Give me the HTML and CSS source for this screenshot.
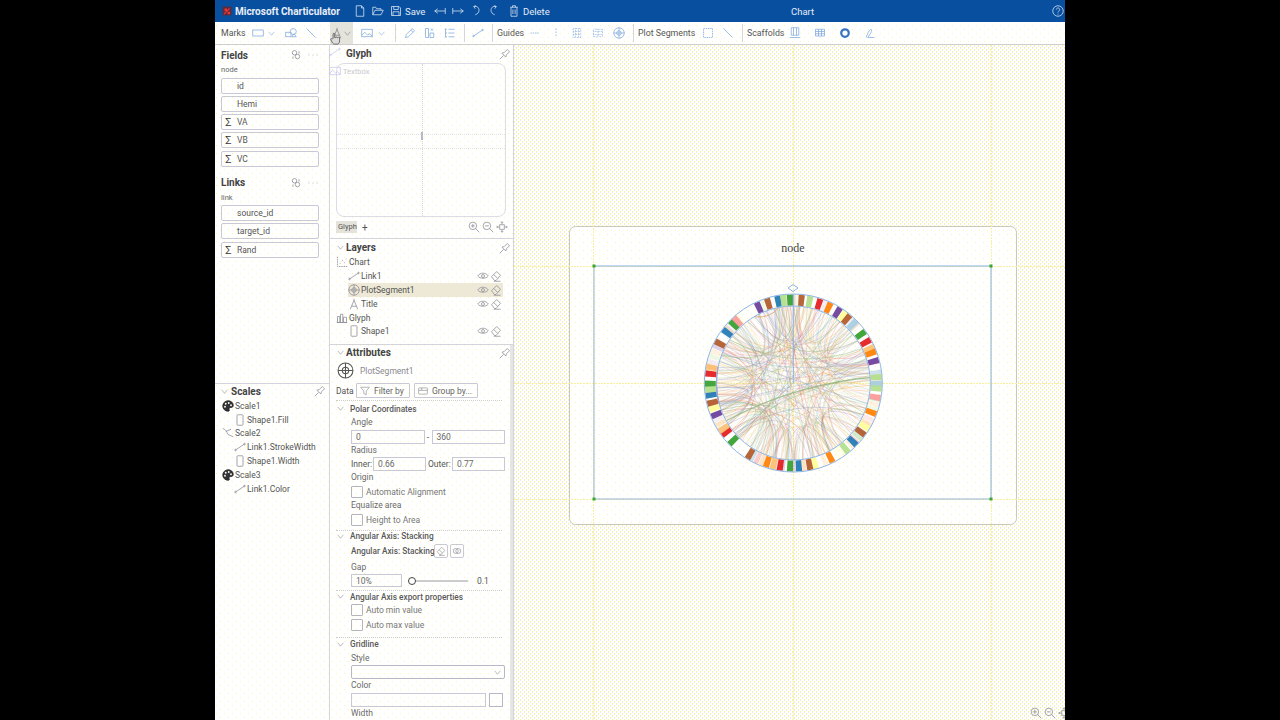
FILE: index.html
```html
<!DOCTYPE html>
<html lang="en">
<head>
<meta charset="utf-8">
<title>Microsoft Charticulator</title>
<link rel="stylesheet" href="styles.css">
</head>
<body>
<svg class="defs" aria-hidden="true">
  <symbol id="doc" viewBox="0 0 16 16"><path d="M3 1h7l3 3v11H3zM10 1v3h3"/></symbol>
  <symbol id="folder" viewBox="0 0 16 16"><path d="M1 13V3h4l1 2h6v2M1 13l3-6h11l-3 6z"/></symbol>
  <symbol id="save" viewBox="0 0 16 16"><path d="M2 2h10l2 2v10H2zM5 2v4h6V2M4 14V9h8v5"/></symbol>
  <symbol id="exl" viewBox="0 0 16 16"><path d="M15 4v8M15 8H1M5 5L1 8l4 3"/></symbol>
  <symbol id="exr" viewBox="0 0 16 16"><path d="M1 4v8M1 8h14M11 5l4 3-4 3"/></symbol>
  <symbol id="undo" viewBox="0 0 16 16"><path d="M5 2c5-1 7 2 7 5s-2 5-5 6M5 2l3-1M5 2l2 3"/></symbol>
  <symbol id="redo" viewBox="0 0 16 16"><path d="M11 2C6 1 4 4 4 7s2 5 5 6M11 2L8 1M11 2L9 5"/></symbol>
  <symbol id="trash" viewBox="0 0 16 16"><path d="M3 3h10M6 3V1h4v2M4 3v12h8V3M6.500 6v6M9.500 6v6"/></symbol>
  <symbol id="help" viewBox="0 0 16 16"><circle cx="8" cy="8" r="7"/><path d="M5.800 6a2.200 2.200 0 1 1 3.400 2c-.8.6-1.200 1-1.200 2M8 11.500v1.200"/></symbol>
  <symbol id="rect" viewBox="0 0 16 16"><rect x="1" y="4" width="14" height="8"/></symbol>
  <symbol id="chev" viewBox="0 0 16 16"><path d="M3 5l5 6 5-6"/></symbol>
  <symbol id="shapes" viewBox="0 0 16 16"><circle cx="11" cy="6" r="4"/><rect x="1" y="7" width="7" height="6"/><path d="M9 13l3-4 3 4z"/></symbol>
  <symbol id="line" viewBox="0 0 16 16"><path d="M2 2l12 12"/></symbol>
  <symbol id="textA" viewBox="0 0 16 16"><path d="M3 15L8 3l5 12M5 11h6M8 3V1"/></symbol>
  <symbol id="image" viewBox="0 0 16 16"><rect x="1" y="3" width="14" height="10"/><path d="M1 11l4-4 4 4 2-2 4 3"/></symbol>
  <symbol id="pencil" viewBox="0 0 16 16"><path d="M2 14l1-4 8-8 3 3-8 8zM9 4l3 3"/></symbol>
  <symbol id="icons" viewBox="0 0 16 16"><path d="M2 2h4v12H2zM8 8h5v6H8zM9 2l3 3M12 2L9 5"/></symbol>
  <symbol id="legend" viewBox="0 0 16 16"><path d="M2 2v12M2 3h2M2 8h2M2 13h2M6 3h8M6 8h8M6 13h8"/></symbol>
  <symbol id="link" viewBox="0 0 16 16"><path d="M2 12l12-8"/><circle cx="2" cy="12" r="1"/><circle cx="14" cy="4" r="1"/></symbol>
  <symbol id="dash" viewBox="0 0 16 16"><path d="M2 8h12" stroke-dasharray="2 1"/></symbol>
  <symbol id="vdash" viewBox="0 0 16 16"><path d="M8 2v12" stroke-dasharray="2 2"/></symbol>
  <symbol id="xgrid" viewBox="0 0 16 16"><path d="M3 2h10v12H3zM6 2v12M10 2v12M3 6h10M3 10h10" stroke-dasharray="1 1"/></symbol>
  <symbol id="ygrid" viewBox="0 0 16 16"><path d="M2 3h12v10H2zM2 6h12M2 10h12M8 3v10" stroke-dasharray="1 1"/></symbol>
  <symbol id="polar" viewBox="0 0 16 16"><circle cx="8" cy="8" r="7"/><circle cx="8" cy="8" r="3"/><path d="M1 8h14M8 1v14"/></symbol>
  <symbol id="sq" viewBox="0 0 16 16"><rect x="2" y="2" width="12" height="12" stroke-dasharray="2 1"/></symbol>
  <symbol id="colg" viewBox="0 0 16 16"><path d="M3 1h10v10H3zM6 1v10M10 1v10M1 14h14"/></symbol>
  <symbol id="rowg" viewBox="0 0 16 16"><path d="M2 3h12v9H2zM2 6h12M2 9h12M6 3v9M10 3v9"/></symbol>
  <symbol id="ringi" viewBox="0 0 16 16"><circle cx="8" cy="8" r="5" stroke-width="3"/></symbol>
  <symbol id="curve" viewBox="0 0 16 16"><path d="M3 14c1-4 3-9 6-11 2 0 1 3 0 5l-4 6h9"/></symbol>
  <symbol id="pin" viewBox="0 0 16 16"><path d="M1 15l5-5M4 7l5 5 1-3 4-4-3-3-4 4z"/></symbol>
  <symbol id="more" viewBox="0 0 16 16"><path d="M2 8h1M7.500 8h1M13 8h1"/></symbol>
  <symbol id="data" viewBox="0 0 16 16"><circle cx="6" cy="5" r="3"/><circle cx="10" cy="10" r="3"/><path d="M12 3v3M4 10v3"/></symbol>
  <symbol id="zin" viewBox="0 0 16 16"><circle cx="6.500" cy="6.500" r="5"/><path d="M10 10l5 5M4 6.500h5M6.500 4v5"/></symbol>
  <symbol id="zout" viewBox="0 0 16 16"><circle cx="6.500" cy="6.500" r="5"/><path d="M10 10l5 5M4 6.500h5"/></symbol>
  <symbol id="move" viewBox="0 0 16 16"><rect x="5" y="5" width="6" height="6"/><path d="M8 1v3M8 12v3M1 8h3M12 8h3M6.500 2.500L8 1l1.500 1.500M6.500 13.500L8 15l1.500-1.500M2.500 6.500L1 8l1.500 1.500M13.500 6.500L15 8l-1.500 1.500"/></symbol>
  <symbol id="eye" viewBox="0 0 16 16"><path d="M1 8c3-5 11-5 14 0-3 4-11 4-14 0z"/><circle cx="8" cy="8" r="2"/></symbol>
  <symbol id="eraser" viewBox="0 0 16 16"><path d="M2 9l7-7 5 5-6 7H6zM5 6l5 5M5 15h9"/></symbol>
  <symbol id="chartl" viewBox="0 0 16 16"><path d="M2 1v13h13" stroke-dasharray="2 1"/><path d="M5 10h1M8 6h1M11 9h1M13 4h1"/></symbol>
  <symbol id="glyphl" viewBox="0 0 16 16"><path d="M1 14h14M2 6h3v8H2zM6 3h3v11H6zM10 7h4v7h-4z"/></symbol>
  <symbol id="shape" viewBox="0 0 16 16"><rect x="4" y="1" width="8" height="14" rx="1"/></symbol>
  <symbol id="palette" viewBox="0 0 16 16"><path class="solid" d="M8 1a7 7 0 1 0 0 14c2 0 2-1 1.500-2.500S10 10 12 10s3-1 3-3c0-3.500-3-6-7-6z"/><circle class="hole" cx="5" cy="5" r="1.200"/><circle class="hole" cx="9" cy="4" r="1.200"/><circle class="hole" cx="4" cy="9" r="1.200"/><circle class="hole" cx="12" cy="7" r="1.200"/></symbol>
  <symbol id="scalec" viewBox="0 0 16 16"><path d="M1 2c4 1 5 4 7 8M5 6l7-3M8 10l7 3"/></symbol>
  <symbol id="filter" viewBox="0 0 16 16"><path d="M1 2h14L10 8v6l-4-2V8z"/></symbol>
  <symbol id="group" viewBox="0 0 16 16"><rect x="1" y="3" width="14" height="10" rx="1"/><path d="M1 7h14M6 3v4"/></symbol>
  <symbol id="tlink" viewBox="0 0 16 16"><circle cx="6" cy="8" r="4"/><circle cx="10" cy="8" r="4"/></symbol>
  <symbol id="hand" viewBox="0 0 16 16"><path class="handf" d="M5 8V2.500a1 1 0 0 1 2 0V7h1a1 1 0 0 1 2 0h1a1 1 0 0 1 2 .5V11c0 2-1 4-3 4H7c-2 0-3-2-4-4l-1-2c0-1 1-1 2-.5z"/></symbol>
  <symbol id="logo" viewBox="0 0 16 16"><rect class="logor" x="1" y="1" width="14" height="14"/><path class="logop" d="M3 13L12 4M5 5h2v2H5zM10 10h2v2h-2z"/></symbol>
</svg>

<div class="app">
  <header class="topbar">
    <svg class="i logo"><use href="#logo"/></svg>
    <span class="brand">Microsoft Charticulator</span>
    <div class="topbtns">
      <svg class="i t"><use href="#doc"/></svg>
      <svg class="i t"><use href="#folder"/></svg>
      <svg class="i t"><use href="#save"/></svg><span class="tl">Save</span>
      <svg class="i t ex"><use href="#exl"/></svg>
      <svg class="i t"><use href="#exr"/></svg>
      <svg class="i t"><use href="#undo"/></svg>
      <svg class="i t"><use href="#redo"/></svg>
      <svg class="i t ex2"><use href="#trash"/></svg><span class="tl">Delete</span>
    </div>
    <span class="doc-title">Chart</span>
    <svg class="i help"><use href="#help"/></svg>
  </header>

  <nav class="toolbar">
    <span class="tbl marks">Marks</span>
    <span class="tb b16"><svg class="i"><use href="#rect"/></svg></span>
    <span class="tb b10"><svg class="i s"><use href="#chev"/></svg></span>
    <span class="tb b20 m5"><svg class="i"><use href="#shapes"/></svg></span>
    <span class="tb b20"><svg class="i"><use href="#line"/></svg></span>
    <span class="tb hot"><svg class="i gr"><use href="#textA"/></svg><svg class="i s gr"><use href="#chev"/></svg></span>
    <span class="tb b18 m5"><svg class="i"><use href="#image"/></svg></span>
    <span class="tb b10"><svg class="i s"><use href="#chev"/></svg></span>
    <span class="sep s1"></span>
    <span class="tb b20 m4"><svg class="i"><use href="#pencil"/></svg></span>
    <span class="tb b20"><svg class="i"><use href="#icons"/></svg></span>
    <span class="tb b20"><svg class="i"><use href="#legend"/></svg></span>
    <span class="sep s2"></span>
    <span class="tb b20"><svg class="i"><use href="#link"/></svg></span>
    <span class="sep s3"></span>
    <span class="tbl gd">Guides</span>
    <span class="tb b20"><svg class="i"><use href="#dash"/></svg></span>
    <span class="tb b20 m1"><svg class="i"><use href="#vdash"/></svg></span>
    <span class="tb b20 m1"><svg class="i"><use href="#xgrid"/></svg></span>
    <span class="tb b20 m1"><svg class="i"><use href="#ygrid"/></svg></span>
    <span class="tb b20 m1"><svg class="i"><use href="#polar"/></svg></span>
    <span class="sep s4"></span>
    <span class="tbl ps">Plot Segments</span>
    <span class="tb b20 m2"><svg class="i"><use href="#sq"/></svg></span>
    <span class="tb b20"><svg class="i"><use href="#line"/></svg></span>
    <span class="sep s5"></span>
    <span class="tbl sf">Scaffolds</span>
    <span class="tb b20 m2"><svg class="i"><use href="#colg"/></svg></span>
    <span class="tb b20 m5"><svg class="i"><use href="#rowg"/></svg></span>
    <span class="tb b20 m5"><svg class="i strong"><use href="#ringi"/></svg></span>
    <span class="tb b20 m5"><svg class="i"><use href="#curve"/></svg></span>
  </nav>

  <main class="main">
    <aside class="left">
      <section class="datasets">
        <div class="ds-head"><h2>Fields</h2><svg class="i g"><use href="#data"/></svg><svg class="i g"><use href="#more"/></svg></div>
        <div class="tbl-name">node</div>
        <div class="field"><span class="sig"></span>id</div>
        <div class="field"><span class="sig"></span>Hemi</div>
        <div class="field"><span class="sig">∑</span>VA</div>
        <div class="field"><span class="sig">∑</span>VB</div>
        <div class="field"><span class="sig">∑</span>VC</div>
        <div class="ds-head links"><h2>Links</h2><svg class="i g"><use href="#data"/></svg><svg class="i g"><use href="#more"/></svg></div>
        <div class="tbl-name">link</div>
        <div class="field"><span class="sig"></span>source_id</div>
        <div class="field"><span class="sig"></span>target_id</div>
        <div class="field"><span class="sig">∑</span>Rand</div>
      </section>
      <section class="scales">
        <div class="p-head"><svg class="i s g"><use href="#chev"/></svg><h2>Scales</h2><svg class="i g"><use href="#pin"/></svg></div>
        <div class="row r0"><svg class="i pal"><use href="#palette"/></svg>Scale1</div>
        <div class="row r1"><svg class="i g"><use href="#shape"/></svg>Shape1.Fill</div>
        <div class="row r0"><svg class="i g"><use href="#scalec"/></svg>Scale2</div>
        <div class="row r1"><svg class="i g"><use href="#link"/></svg>Link1.StrokeWidth</div>
        <div class="row r1"><svg class="i g"><use href="#shape"/></svg>Shape1.Width</div>
        <div class="row r0"><svg class="i pal"><use href="#palette"/></svg>Scale3</div>
        <div class="row r1"><svg class="i g"><use href="#link"/></svg>Link1.Color</div>
      </section>
    </aside>

    <div class="mid">
      <section class="glyph">
        <div class="p-head gh"><h2>Glyph</h2><svg class="i g"><use href="#pin"/></svg></div>
        <div class="gcanvas"><span class="gv"></span><span class="gh1"></span><span class="gh2"></span><span class="gtick"></span></div>
        <div class="gtabs"><span class="gtab">Glyph</span><span class="plus">+</span><span class="spring"></span>
          <svg class="i g"><use href="#zin"/></svg><svg class="i g"><use href="#zout"/></svg><svg class="i g"><use href="#move"/></svg></div>
        <div class="menuover"><div class="mrow"><svg class="i mo"><use href="#link"/></svg></div><div class="mrow"><svg class="i mo"><use href="#image"/></svg>Textbox</div></div>
      </section>

      <section class="layers">
        <div class="p-head"><svg class="i s g"><use href="#chev"/></svg><h2>Layers</h2><svg class="i g"><use href="#pin"/></svg></div>
        <div class="row r0"><svg class="i g"><use href="#chartl"/></svg>Chart</div>
        <div class="row r1"><svg class="i g"><use href="#link"/></svg>Link1<span class="spring"></span><svg class="i g"><use href="#eye"/></svg><svg class="i g"><use href="#eraser"/></svg></div>
        <div class="row r1 sel"><svg class="i g"><use href="#polar"/></svg>PlotSegment1<span class="spring"></span><svg class="i g"><use href="#eye"/></svg><svg class="i g"><use href="#eraser"/></svg></div>
        <div class="row r1"><svg class="i g"><use href="#textA"/></svg>Title<span class="spring"></span><svg class="i g"><use href="#eye"/></svg><svg class="i g"><use href="#eraser"/></svg></div>
        <div class="row r0"><svg class="i g"><use href="#glyphl"/></svg>Glyph</div>
        <div class="row r1"><svg class="i g"><use href="#shape"/></svg>Shape1<span class="spring"></span><svg class="i g"><use href="#eye"/></svg><svg class="i g"><use href="#eraser"/></svg></div>
      </section>

      <section class="attrs">
        <div class="p-head"><svg class="i s g"><use href="#chev"/></svg><h2>Attributes</h2><svg class="i g"><use href="#pin"/></svg></div>
        <div class="obj"><svg class="i big"><use href="#polar"/></svg><span>PlotSegment1</span></div>
        <div class="datarow"><span class="dl">Data</span>
          <span class="btn bf"><svg class="i g"><use href="#filter"/></svg>Filter by</span>
          <span class="btn bg"><svg class="i g"><use href="#group"/></svg>Group by...</span></div>

        <div class="sec s-polar">
          <div class="sec-h"><svg class="i s g"><use href="#chev"/></svg>Polar Coordinates</div>
          <div class="lab">Angle</div>
          <div class="inrow"><span class="inp">0</span><span class="dashc">-</span><span class="inp">360</span></div>
          <div class="lab">Radius</div>
          <div class="inrow"><span class="il">Inner:</span><span class="inp">0.66</span><span class="il">Outer:</span><span class="inp">0.77</span></div>
          <div class="lab">Origin</div>
          <div class="chk"><span class="box"></span>Automatic Alignment</div>
          <div class="lab l2">Equalize area</div>
          <div class="chk"><span class="box"></span>Height to Area</div>
        </div>

        <div class="sec s-stack">
          <div class="sec-h"><svg class="i s g"><use href="#chev"/></svg>Angular Axis: Stacking</div>
          <div class="stack"><b>Angular Axis: Stacking</b><span class="sq"><svg class="i g"><use href="#eraser"/></svg></span><span class="sq"><svg class="i g"><use href="#tlink"/></svg></span></div>
          <div class="lab l3">Gap</div>
          <div class="gap"><span class="inp g10">10%</span><span class="slider"><span class="thumb"></span></span><span class="val">0.1</span></div>
        </div>

        <div class="sec s-exp">
          <div class="sec-h"><svg class="i s g"><use href="#chev"/></svg>Angular Axis export properties</div>
          <div class="chk c3"><span class="box"></span>Auto min value</div>
          <div class="chk c3"><span class="box"></span>Auto max value</div>
        </div>

        <div class="sec last">
          <div class="sec-h"><svg class="i s g"><use href="#chev"/></svg>Gridline</div>
          <div class="lab">Style</div>
          <div class="select"><svg class="i s g"><use href="#chev"/></svg></div>
          <div class="lab">Color</div>
          <div class="colorrow"><span class="inp wide"></span><span class="swatch"></span></div>
          <div class="lab">Width</div>
          <div class="select"></div>
        </div>
      </section>
    </div>

    <section class="canvas">
      <svg class="chart" id="chart" viewBox="514 45 551 675">
        <defs>
          <pattern id="sparse" width="8" height="8" patternUnits="userSpaceOnUse" x="514" y="45">
            <rect width="8" height="8" fill="#fff"/>
            <rect x="1" y="1" width="1" height="1" fill="#fbf7a8"/>
            <rect x="5" y="5" width="1" height="1" fill="#fbf7a8"/>
          </pattern>
        </defs>
        <rect class="frame" x="569.500" y="226.500" width="447" height="298" rx="6"/>
        <g class="guides">
          <path d="M593.500 45V720M793.500 45V720M991.500 45V720"/>
          <path d="M514 266.500H1065M514 383.500H1065M514 499.500H1065"/>
        </g>
        <text class="title" x="793" y="252">node</text>
        <g id="chords"></g>
        <g id="ringcells"></g>
        <circle class="axis" cx="793.300" cy="383" r="89"/>
        <circle class="axis" cx="793.300" cy="383" r="77"/>
        <path class="axis" d="M793.300 294V383"/>
        <path class="diamond" d="M788 288l5-3.500 5 3.500-5 3.500z"/>
        <path class="pbox" d="M594 266H991V499"/>
        <path class="pbox2" d="M594 266V499H991"/>
        <rect class="handle" x="592.500" y="264.500" width="3" height="3"/>
        <rect class="handle" x="989.500" y="264.500" width="3" height="3"/>
        <rect class="handle" x="592.500" y="497.500" width="3" height="3"/>
        <rect class="handle" x="989.500" y="497.500" width="3" height="3"/>
      </svg>
      <div class="czoom"><svg class="i g"><use href="#zin"/></svg><svg class="i g"><use href="#zout"/></svg><svg class="i g"><use href="#move"/></svg></div>
    </section>
  </main>
  <svg class="i cursor"><use href="#hand"/></svg>
</div>
<script src="chart.js"></script>
</body>
</html>
```

FILE: styles.css
```css
* { box-sizing: border-box; }
html, body { margin: 0; height: 100%; background: #000; overflow: hidden; }
body { display: flex; justify-content: center; font-family: Roboto, "Noto Sans", sans-serif; font-size: 8.500px; color: #555; }
h2 { margin: 0; font-size: 10px; font-weight: 700; color: #444; }
.defs { position: absolute; width: 0; height: 0; }
.app { position: relative; width: 850px; height: 720px; display: flex; flex-direction: column; background-color: #fff;
  background-image: conic-gradient(from 270deg at 1px 1px, #fbf7a8 25%, transparent 0), conic-gradient(from 270deg at 1px 1px, #fbf7a8 25%, transparent 0);
  background-size: 8px 8px; background-position: 1px 1px, 5px 5px; }

.i { width: 12px; height: 12px; flex: none; fill: none; stroke: currentColor; stroke-width: 1; color: #7fa8dc; }
.i.s { width: 9px; height: 9px; }
.i.g { color: #8a8a94; }
.i.gr { color: #7a7a80; }
.i.strong { color: #3a72c0; }
.solid { fill: #333; stroke: #222; }
.hole { fill: #fff; stroke: none; }
.logor { fill: #5c2a3a; stroke: none; }
.logop { stroke: #e33; stroke-width: 2; }
.handf { fill: #ddd; stroke: #555; }

.topbar { height: 22px; flex: none; display: flex; align-items: center; padding-left: 7px; background: #08509f; color: #fff; position: relative; }
.i.logo { width: 10px; height: 10px; margin-right: 3px; }
.brand { font-size: 10px; font-weight: 700; width: 107px; color: #e8eef8; white-space: nowrap; }
.topbtns { display: flex; align-items: center; margin-left: 6px; }
.i.t { color: #dfe8f5; margin-left: 6px; }
.i.ex { margin-left: 9px; }
.i.ex2 { margin-left: 8px; }
.tl { margin-left: 3px; width: 20px; font-size: 9.500px; color: #e4ecf7; }
.doc-title { position: absolute; left: 576px; font-size: 9.500px; color: #e4ecf7; }
.i.help { position: absolute; left: 837px; color: #dfe8f5; }

.toolbar { height: 23px; flex: none; display: flex; align-items: center; padding-left: 6px; border-bottom: 1px solid #cfcfcf; font-size: 8.800px; color: #555; }
.tbl { white-space: nowrap; }
.gd { width: 28px; }
.ps { width: 58px; }
.sf { width: 36px; }
.tb { height: 22px; display: flex; align-items: center; justify-content: center; flex: none; }
.b16 { width: 16px; }
.b10 { width: 10px; }
.b18 { width: 18px; }
.b20 { width: 20px; }
.marks { width: 29px; }
.m1 { margin-left: 1px; }
.m2 { margin-left: 2px; }
.m4 { margin-left: 4px; }
.m5 { margin-left: 5px; }
.hot { width: 23px; margin-left: 9px; background: #e4e4dc; }
.sep { width: 1px; height: 18px; background: #d6d6d6; flex: none; }
.s1 { margin-left: 9px; }
.s2 { margin: 0 3px 0 4px; }
.s3 { margin: 0 4px 0 4px; }
.s4 { margin: 0 4px 0 4px; }
.s5 { margin: 0 4px 0 4px; }

.main { flex: 1; display: flex; min-height: 0; }
.left { width: 115px; flex: none; display: flex; flex-direction: column; border-right: 1px solid #d4d4dc; }
.datasets { flex: 1; padding: 3px 10px 0 6px; }
.ds-head { height: 14px; display: flex; align-items: center; gap: 5px; }
.ds-head h2 { flex: 1; }
.ds-head.links { margin-top: 9px; }
.tbl-name { height: 15.500px; padding-top: 3px; font-size: 7.500px; color: #666; }
.field { height: 16px; margin-bottom: 2.300px; display: flex; align-items: center; border: 1px solid #c9c9d4; border-radius: 2px; color: #555; }
.sig { width: 15px; padding-left: 3px; font-size: 10px; color: #333; line-height: 1; }
.scales { height: 337px; flex: none; border-top: 1px solid #d4d4dc; padding: 0 3px 0 5px; }
.p-head { height: 15px; display: flex; align-items: center; gap: 1px; }
.p-head h2 { flex: 1; }
.scales .p-head { height: 14px; margin-bottom: 1px; gap: 2px; }
.row { height: 13.800px; display: flex; align-items: center; gap: 1px; white-space: nowrap; color: #555; }
.r0 { padding-left: 2px; }
.r1 { padding-left: 14px; }
.pal { color: #222; }
.spring { flex: 1; }

.mid { width: 184px; flex: none; display: flex; flex-direction: column; border-right: 1px solid #d4d4dc; }
.glyph { position: relative; height: 194px; flex: none; padding: 1px 2px 0 6px; border-bottom: 1px solid #d4d4dc; }
.gh { padding-left: 10px; }
.gcanvas { position: relative; height: 154px; width: 170px; margin-top: 2px; border: 1px solid #dcdce6; border-radius: 8px; }
.gv { position: absolute; left: 85px; top: 0; bottom: 0; border-left: 1px dotted #d4d4dc; }
.gh1 { position: absolute; left: 0; right: 0; top: 70px; border-top: 1px dotted #e2e2e2; }
.gh2 { position: absolute; left: 0; right: 0; top: 84px; border-top: 1px dotted #e2e2e2; }
.gtick { position: absolute; left: 84px; top: 68px; width: 2px; height: 8px; background: #b8b8c4; }
.gtabs { display: flex; align-items: center; gap: 2px; height: 14px; margin-top: 3px; padding-right: 3px; font-size: 7.500px; }
.gtab { background: #e4e4dc; padding: 1px 2px; height: 12px; line-height: 10px; width: 21px; white-space: nowrap; }
.plus { margin-left: 3px; font-size: 10px; }
.menuover { position: absolute; left: -1px; top: 1px; display: flex; flex-direction: column; gap: 7px; color: #c8c8d0; font-size: 7.500px; }
.mrow { display: flex; align-items: center; gap: 2px; }
.i.mo { color: #c4c8e8; }
.layers { height: 106px; flex: none; padding: 1px 2px 0 6px; border-bottom: 1px solid #d4d4dc; }
.layers .p-head { margin-bottom: .5px; }
.layers .r0 { padding-left: 0; }
.layers .r1 { padding-left: 0; margin-left: 12px; }
.layers .row { padding-right: 1px; margin-right: 8px; }
.sel { background: #eee9d6; }
.attrs { flex: 1; min-height: 0; overflow: hidden; padding: 0 8px 0 6px; border-right: 3px solid #e6e6e6; }
.attrs .p-head { margin-right: -9px; }
.obj { height: 21px; display: flex; align-items: center; gap: 6px; color: #8a8a94; }
.i.big { width: 17px; height: 17px; color: #555; margin-left: 1px; }
.datarow { height: 18px; margin-top: 2px; display: flex; align-items: center; gap: 4px; border-bottom: 1px dotted #ccc; padding-bottom: 2px; }
.dl { width: 16px; }
.btn { height: 15px; flex: none; display: flex; align-items: center; gap: 4px; border: 1px solid #c9c9d4; padding: 0 3px; border-radius: 1px; white-space: nowrap; color: #666; }
.btn .i { width: 10px; height: 10px; }
.bf { width: 54px; }
.bg { width: 64px; }
.sec { border-bottom: 1px dotted #ccc; padding-bottom: 4px; margin-top: -1px; }
.s-polar { margin-top: 0; padding-bottom: 3.500px; }
.s-stack { padding-bottom: 3px; }
.s-exp { padding-bottom: 5.500px; }
.sec-h { height: 13px; display: flex; align-items: center; gap: 5px; color: #5a5a5a; white-space: nowrap; font-size: 8.300px; font-weight: 500; }
.s-polar .sec-h { height: 15px; }
.s-exp .sec-h { height: 13.500px; }
.last .sec-h { height: 15px; }
.lab { height: 13.500px; line-height: 13px; margin-left: 15px; color: #6a6a6a; }
.l2 { margin-top: 1px; }
.l3 { margin-top: 3px; }
.inrow { display: flex; align-items: center; height: 14px; margin-left: 15px; width: 154px; }
.inp { flex: 1; min-width: 0; height: 14px; border: 1px solid #c9c9d4; padding: 0 4px; line-height: 12px; color: #666; }
.dashc { width: 7px; text-align: center; }
.il { width: 22px; flex: none; font-size: 8.500px; }
.il ~ .il { width: 26px; padding-left: 2px; }
.chk { height: 13px; display: flex; align-items: center; gap: 3px; margin-left: 15px; color: #777; margin-top: .5px; }
.c3 { margin-top: 1.500px; }
.sec-h + .c3 { margin-top: 0; }
.box { width: 12px; height: 12px; border: 1px solid #b4b4bc; border-radius: 1px; flex: none; }
.stack { height: 14px; margin: 1px 0 0 15px; display: flex; align-items: center; gap: 2px; white-space: nowrap; }
.stack b { color: #5a5a5a; font-size: 8.300px; font-weight: 500; width: 81px; }
.sq { width: 14px; height: 14px; border: 1px solid #c9c9d4; display: flex; align-items: center; justify-content: center; border-radius: 2px; }
.sq .i { width: 10px; height: 10px; }
.gap { display: flex; align-items: center; height: 13px; margin-left: 15px; }
.g10 { flex: none; width: 51px; height: 13px; }
.slider { position: relative; width: 60px; height: 2px; margin-left: 6px; background: #ccc; }
.thumb { position: absolute; left: 0; top: -3px; width: 8px; height: 8px; background: #fff; border: 1px solid #444; border-radius: 50%; }
.val { margin-left: 9px; }
.last { border: 0; }
.select { height: 14px; margin-left: 15px; width: 154px; border: 1px solid #b8b8c4; border-radius: 2px; display: flex; align-items: center; justify-content: flex-end; padding-right: 2px; }
.colorrow { display: flex; gap: 3px; height: 14px; margin-left: 15px; width: 152px; }
.wide { flex: 1; }
.swatch { width: 14px; height: 14px; border: 1px solid #b8b8c4; }

.canvas { position: relative; flex: 1; min-width: 0; overflow: hidden; background-color: #fff;
  background-image: conic-gradient(from 270deg at 1px 1px, #f9f190 25%, transparent 0), conic-gradient(from 270deg at 1px 1px, #f9f190 25%, transparent 0), conic-gradient(from 270deg at 1px 1px, #ecebf0 25%, transparent 0), conic-gradient(from 270deg at 1px 1px, #ecebf0 25%, transparent 0);
  background-size: 4px 4px; background-position: 0 0, 2px 2px, 0 1px, 2px 3px; }
.chart { display: block; width: 551px; height: 675px; }
.frame { fill: url(#sparse); stroke: #c8c8bc; }
.guides path { fill: none; stroke: #f6f0a0; stroke-dasharray: 2 1; }
.title { font-family: "Liberation Serif", serif; font-size: 12px; fill: #444; text-anchor: middle; }
.axis { fill: none; stroke: #8fb4e2; stroke-width: 1; }
.diamond { fill: none; stroke: #8fb4e2; }
.pbox { fill: none; stroke: #86b0e0; }
.pbox2 { fill: none; stroke: #93b6d8; }
.handle { fill: #3aa82f; }
.czoom { position: absolute; right: -5px; bottom: 1px; display: flex; gap: 2px; }
.cursor { position: absolute; left: 114px; top: 32px; width: 13px; height: 13px; }
```

FILE: chart.js
```js
var NS = "http://www.w3.org/2000/svg";
var CX = 793.3, CY = 383;
var C = { lb: "#a6cee3", b: "#1f78b4", lg: "#b2df8a", g: "#33a02c", p: "#fb9a99", r: "#e31a1c", lo: "#fdbf6f", o: "#ff7f00", lv: "#cab2d6", v: "#6a3d9a", y: "#ffff99", br: "#b15928" };
var palette = Object.keys(C).map(function (k) { return C[k]; });

// Saturated ring cells, as [x, y, colour] read off a picture 3× larger, centred on (305, 308).
var cells = [[330,50,"br"],[355,55,"lg"],[385,60,"r"],[415,72,"o"],[443,87,"v"],[458,100,"y"],[472,108,"br"],[490,125,"lb"],[518,155,"g"],[533,180,"r"],[545,200,"lo"],[550,214,"o"],[558,240,"v"],[565,290,"lg"],[567,310,"lb"],[567,325,"lg"],[565,353,"p"],[550,400,"o"],[530,445,"y"],[517,462,"br"],[490,490,"b"],[465,510,"lg"],[420,540,"o"],[372,560,"y"],[355,562,"br"],[322,567,"b"],[295,567,"g"],[265,563,"r"],[245,558,"lo"],[225,553,"o"],[172,527,"br"],[120,485,"g"],[98,460,"r"],[92,447,"lo"],[68,405,"v"],[62,385,"y"],[55,368,"br"],[50,345,"b"],[50,328,"lg"],[50,310,"g"],[50,280,"r"],[52,260,"lo"],[75,185,"br"],[100,152,"b"],[122,128,"g"],[135,120,"p"],[198,73,"v"],[228,62,"br"],[258,53,"b"],[275,50,"lg"],[295,50,"g"]];

var seed = 7;
function rnd() { seed = (seed * 16807) % 2147483647; return seed / 2147483647; }
function pt(a, r) { return [CX + r * Math.sin(a), CY - r * Math.cos(a)]; }
function el(parent, name, attrs) {
  var e = document.createElementNS(NS, name);
  for (var k in attrs) e.setAttribute(k, attrs[k]);
  parent.appendChild(e);
  return e;
}
function cell(g, deg, w, color, op) {
  var a0 = (deg - w / 2) * Math.PI / 180, a1 = (deg + w / 2) * Math.PI / 180;
  var p = pt(a0, 83), q = pt(a1, 83);
  el(g, "path", { d: "M" + p[0] + " " + p[1] + "A83 83 0 0 1 " + q[0] + " " + q[1], fill: "none", stroke: color, "stroke-width": 11, opacity: op });
}

var ring = document.getElementById("ringcells");
for (var d = 0; d < 360; d += 3.6) {
  if (rnd() < 0.6) cell(ring, d, 3.2, palette[Math.floor(rnd() * 12)], 0.22);
}
cells.forEach(function (c) {
  var deg = Math.atan2(c[0] - 305, 308 - c[1]) * 180 / Math.PI;
  cell(ring, deg, 4, C[c[2]], 0.92);
});

var chords = document.getElementById("chords");
function chord(a, b, color, w, op, pull) {
  var p = pt(a, 77), q = pt(b, 77);
  var cx = CX + ((p[0] + q[0]) / 2 - CX) * pull, cy = CY + ((p[1] + q[1]) / 2 - CY) * pull;
  el(chords, "path", { d: "M" + p[0] + " " + p[1] + "Q" + cx + " " + cy + " " + q[0] + " " + q[1], fill: "none", stroke: color, "stroke-width": w, opacity: op });
}
for (var i = 0; i < 340; i++) {
  chord(rnd() * 6.283, rnd() * 6.283, palette[Math.floor(rnd() * 12)], 0.5 + rnd() * 0.4, 0.22, 0.2);
}
for (var j = 0; j < 18; j++) {
  chord(rnd() * 6.283, rnd() * 6.283, ["#8fb37a", "#9aa6c8", "#d0a090"][j % 3], 0.8, 0.55, 0.25);
}
chord(4.45, 4.92, "#7f5fa8", 1, 0.9, 1.05);
chord(5.75, 6.1, "#e8a060", 1, 0.8, 0.9);
chord(1.5, 4.2, "#8fb37a", 1.2, 0.8, 0.1);
```
